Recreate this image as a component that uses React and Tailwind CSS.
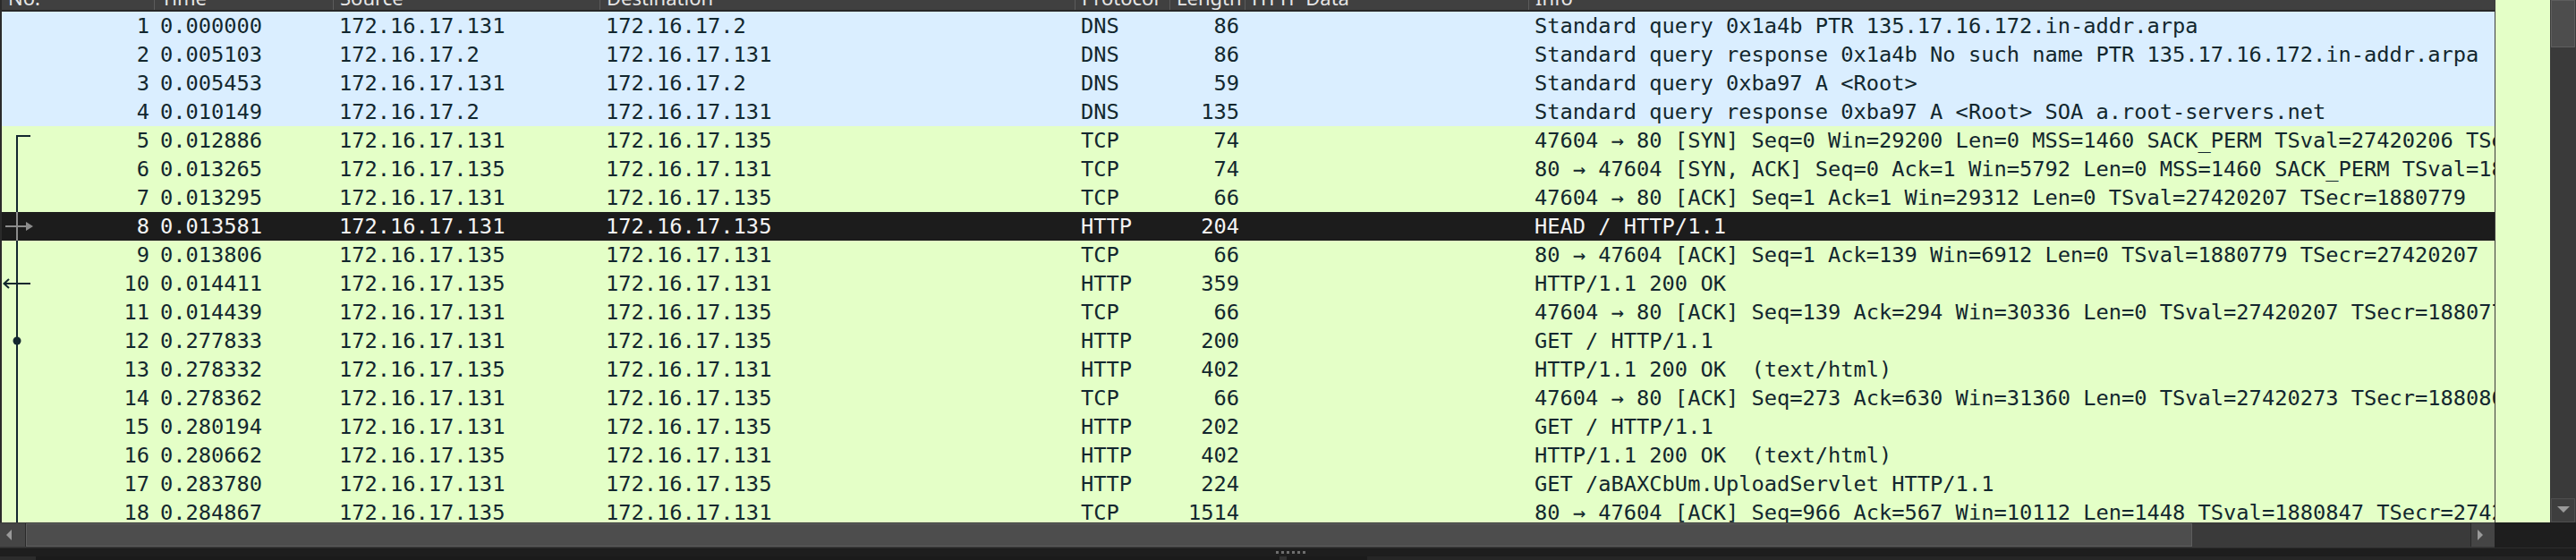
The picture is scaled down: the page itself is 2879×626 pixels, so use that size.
import React from 'react';

const A = '172.16.17.131';
const B = '172.16.17.135';
const D = '172.16.17.2';

const packets = [
  [1, '0.000000', A, D, 'DNS', 86, 'Standard query 0x1a4b PTR 135.17.16.172.in-addr.arpa'],
  [2, '0.005103', D, A, 'DNS', 86, 'Standard query response 0x1a4b No such name PTR 135.17.16.172.in-addr.arpa'],
  [3, '0.005453', A, D, 'DNS', 59, 'Standard query 0xba97 A <Root>'],
  [4, '0.010149', D, A, 'DNS', 135, 'Standard query response 0xba97 A <Root> SOA a.root-servers.net'],
  [5, '0.012886', A, B, 'TCP', 74, '47604 → 80 [SYN] Seq=0 Win=29200 Len=0 MSS=1460 SACK_PERM TSval=27420206 TSecr=0 WS=128', 'start'],
  [6, '0.013265', B, A, 'TCP', 74, '80 → 47604 [SYN, ACK] Seq=0 Ack=1 Win=5792 Len=0 MSS=1460 SACK_PERM TSval=1880779 TSecr=27420206 WS=4', 'line'],
  [7, '0.013295', A, B, 'TCP', 66, '47604 → 80 [ACK] Seq=1 Ack=1 Win=29312 Len=0 TSval=27420207 TSecr=1880779', 'line'],
  [8, '0.013581', A, B, 'HTTP', 204, 'HEAD / HTTP/1.1', 'sel'],
  [9, '0.013806', B, A, 'TCP', 66, '80 → 47604 [ACK] Seq=1 Ack=139 Win=6912 Len=0 TSval=1880779 TSecr=27420207', 'line'],
  [10, '0.014411', B, A, 'HTTP', 359, 'HTTP/1.1 200 OK', 'left'],
  [11, '0.014439', A, B, 'TCP', 66, '47604 → 80 [ACK] Seq=139 Ack=294 Win=30336 Len=0 TSval=27420207 TSecr=1880779', 'line'],
  [12, '0.277833', A, B, 'HTTP', 200, 'GET / HTTP/1.1', 'dot'],
  [13, '0.278332', B, A, 'HTTP', 402, 'HTTP/1.1 200 OK  (text/html)', 'line'],
  [14, '0.278362', A, B, 'TCP', 66, '47604 → 80 [ACK] Seq=273 Ack=630 Win=31360 Len=0 TSval=27420273 TSecr=1880808', 'line'],
  [15, '0.280194', A, B, 'HTTP', 202, 'GET / HTTP/1.1', 'line'],
  [16, '0.280662', B, A, 'HTTP', 402, 'HTTP/1.1 200 OK  (text/html)', 'line'],
  [17, '0.283780', A, B, 'HTTP', 224, 'GET /aBAXCbUm.UploadServlet HTTP/1.1', 'line'],
  [18, '0.284867', B, A, 'TCP', 1514, '80 → 47604 [ACK] Seq=966 Ack=567 Win=10112 Len=1448 TSval=1880847 TSecr=27420207', 'line'],
];

const headers = ['No.', 'Time', 'Source', 'Destination', 'Protocol', 'Length', 'HTTP Data', 'Info'];

// related-packet marks drawn in the No. column
function Related({ kind }) {
  if (!kind) return null;
  const ink = kind === 'sel' ? '#8c8c8c' : '#12272e';
  return (
    <svg className="absolute left-0 top-0" width="40" height="32" viewBox="0 0 40 32">
      {kind === 'start' ? (
        <>
          <rect x="16" y="10" width="2" height="22" fill={ink} />
          <rect x="16" y="10" width="16" height="2" fill={ink} />
        </>
      ) : (
        <rect x="16" y="0" width="2" height="32" fill={ink} />
      )}
      {kind === 'sel' && (
        <>
          <rect x="4" y="15" width="28" height="2" fill={ink} />
          <polygon points="27,11 35,16 27,21" fill={ink} />
        </>
      )}
      {kind === 'left' && (
        <>
          <rect x="3" y="15" width="29" height="2" fill={ink} />
          <polyline points="8,11 2.5,16 8,21" fill="none" stroke={ink} strokeWidth="2" />
        </>
      )}
      {kind === 'dot' && <circle cx="17" cy="16" r="4.5" fill={ink} />}
    </svg>
  );
}

function Row({ p }) {
  const [no, time, src, dst, proto, len, info, kind] = p;
  const sel = kind === 'sel';
  const bg = sel ? 'bg-[#1c1c1c] text-[#f4f4f4]' : proto === 'DNS' ? 'bg-[#daeeff] text-[#12272e]' : 'bg-[#e4ffc7] text-[#12272e]';
  return (
    <div className={`grid h-[32px] shrink-0 grid-cols-[170px_200px_298px_531px_106px_84px_317px_1080px] items-center leading-[32px] ${bg}`}>
      <div className="relative h-full pr-[5px] text-right">
        <Related kind={kind} />
        {no}
      </div>
      <div className="pl-[7px]">{time}</div>
      <div className="pl-[7px]">{src}</div>
      <div className="pl-[7px]">{dst}</div>
      <div className="pl-[7px]">{proto}</div>
      <div className="pr-[6px] text-right">{len}</div>
      <div className="pl-[7px]"></div>
      <div className="overflow-hidden whitespace-pre pl-[7px]">{info}</div>
    </div>
  );
}

function Arrow({ dir }) {
  const pts = { left: '9,4 9,16 3,10', right: '4,4 4,16 10,10', down: '3,5 17,5 10,12' }[dir];
  return (
    <svg width="20" height="20" viewBox="0 0 20 20">
      <polygon points={pts} fill="#9a9a9a" />
    </svg>
  );
}

export default function App() {
  return (
    <div className="flex h-[626px] w-[2879px] flex-col overflow-hidden bg-[#1e1e1e]" style={{ fontFamily: '"DejaVu Sans Mono", monospace' }}>
      <div className="flex h-[584px] shrink-0">
        <div className="flex w-[2788px] shrink-0 flex-col overflow-hidden border-l-2 border-[#2a2a2a] text-[23.7px]">
          <div className="grid h-[13px] shrink-0 grid-cols-[170px_200px_298px_531px_106px_84px_317px_1080px] overflow-hidden border-b-2 border-[#262626] bg-[#404040] font-['Noto_Sans',sans-serif] text-[22px] leading-[20px] text-[#e6e6e6]">
            {headers.map((h, i) => (
              <div key={h} className={`h-[11px] overflow-visible pl-[7px] ${i ? 'border-l border-[#5c5c5c]' : ''}`}>
                <div className="-mt-[13px] whitespace-nowrap">{h}</div>
              </div>
            ))}
          </div>
          {packets.map((p) => (
            <Row key={p[0]} p={p} />
          ))}
        </div>
        <div className="w-px shrink-0 bg-[#3c3c3c]" />
        <div className="w-[61px] shrink-0 bg-[#e4ffc7]" />
        <div className="flex w-[29px] shrink-0 flex-col bg-[#3a3a3a] px-px">
          <div className="h-[53px] shrink-0 border border-[#5e5e5e] bg-[#4d4d4d]" />
          <div className="flex-1" />
          <div className="flex h-[27px] shrink-0 items-center justify-center border border-[#4e4e4e] bg-[#3e3e3e]">
            <Arrow dir="down" />
          </div>
        </div>
      </div>

      <div className="flex h-[28px] shrink-0">
        <div className="flex w-[2788px] shrink-0 bg-[#3a3a3a] py-px">
          <div className="flex w-[29px] shrink-0 items-center justify-center border-r border-[#2a2a2a] bg-[#454545]">
            <Arrow dir="left" />
          </div>
          <div className="w-[2421px] shrink-0 border border-[#5e5e5e] bg-[#4d4d4d]" />
          <div className="flex-1" />
          <div className="flex w-[27px] shrink-0 items-center justify-center border-l border-[#2a2a2a] bg-[#454545]">
            <Arrow dir="right" />
          </div>
        </div>
        <div className="flex-1 bg-[#1e1e1e]" />
      </div>

      <div className="flex h-[10px] shrink-0 items-center border-t border-[#2c2c2c] bg-[#1e1e1e] pl-[1426px]">
        <div className="flex gap-[3px]">
          {[0, 1, 2, 3, 4, 5].map((d) => (
            <span key={d} className="h-[3px] w-[3px] bg-[#6e6e6e]" />
          ))}
        </div>
      </div>
      <div className="flex h-[4px] shrink-0 bg-[#1b1b1b]">
        <div className="w-[40px] bg-[#2c2c2c]" />
        <div className="w-[1390px]" />
        <div className="w-[8px] bg-[#333333]" />
        <div className="w-[90px]" />
        <div className="flex-1 bg-[#262626]" />
      </div>
    </div>
  );
}
